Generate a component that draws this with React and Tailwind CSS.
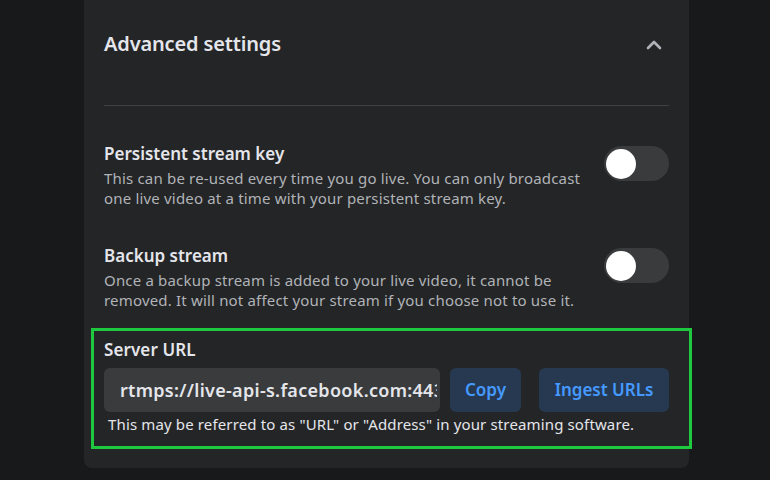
import React from 'react';

function Toggle() {
  return (
    <div className="mt-[3px] flex h-[35px] w-[65px] shrink-0 items-center rounded-full bg-[#3a3b3c] px-[2px]">
      <div className="h-[30px] w-[30px] rounded-full bg-white" />
    </div>
  );
}

function SettingRow({ title, description }) {
  return (
    <div className="flex items-start justify-between gap-3">
      <div className="w-[488px]">
        <div className="text-[17px] font-semibold leading-[22px] text-[#e4e6eb]">{title}</div>
        <div className="mt-[3px] text-[15px] leading-[20px] tracking-[0.18px] text-[#b0b3b8]">{description}</div>
      </div>
      <Toggle />
    </div>
  );
}

export default function App() {
  return (
    <div className="h-[480px] w-[770px] overflow-hidden bg-[#18191a] font-['Noto_Sans',sans-serif]">
      <div className="ml-[84px] w-[605px] rounded-b-lg bg-[#242526] px-5 pb-[19px]">
        {/* Header */}
        <div className="flex items-center justify-between pt-8">
          <h2 className="text-[20px] font-semibold leading-[24px] tracking-[-0.15px] text-[#e4e6eb]">Advanced settings</h2>
          <svg width="16" height="12" viewBox="0 0 16 12" className="mr-[7px] mt-[2px]">
            <path d="M2 9 L8 3 L14 9" fill="none" stroke="#b0b3b8" strokeWidth="2.6" strokeLinecap="round" strokeLinejoin="round" />
          </svg>
        </div>

        <div className="mt-[49px] h-px bg-[#3e4042]" />

        {/* Toggles */}
        <div className="mt-[37px] flex flex-col gap-[37px]">
          <SettingRow
            title="Persistent stream key"
            description="This can be re-used every time you go live. You can only broadcast one live video at a time with your persistent stream key."
          />
          <SettingRow
            title="Backup stream"
            description="Once a backup stream is added to your live video, it cannot be removed. It will not affect your stream if you choose not to use it."
          />
        </div>

        {/* Server URL */}
        <div className="-ml-[13px] -mr-[23px] mt-[18px] border-[3px] border-[#1ec940] pb-3 pl-[10px] pr-[20px] pt-2">
          <div className="text-[17px] font-semibold leading-[22px] tracking-[0.1px] text-[#e4e6eb]">Server URL</div>
          <div className="mt-[7px] flex items-center">
            <input
              readOnly
              value="rtmps://live-api-s.facebook.com:443/rtmp/"
              className="h-[44px] min-w-0 flex-1 rounded-md bg-[#3a3b3c] pl-4 pr-[3px] text-[18px] font-semibold tracking-[0.3px] text-[#e4e6eb] outline-none"
            />
            <button className="ml-[10px] h-[44px] w-[71px] rounded-md bg-[#263951] text-[17px] font-semibold text-[#4599ff]">
              Copy
            </button>
            <button className="ml-[18px] h-[44px] w-[130px] rounded-md bg-[#263951] text-[17px] font-semibold text-[#4599ff]">
              Ingest URLs
            </button>
          </div>
          <div className="mt-[2px] pl-1 text-[15px] leading-[20px] tracking-[0.14px] text-[#e4e6eb]">
            This may be referred to as "URL" or "Address" in your streaming software.
          </div>
        </div>
      </div>
    </div>
  );
}
